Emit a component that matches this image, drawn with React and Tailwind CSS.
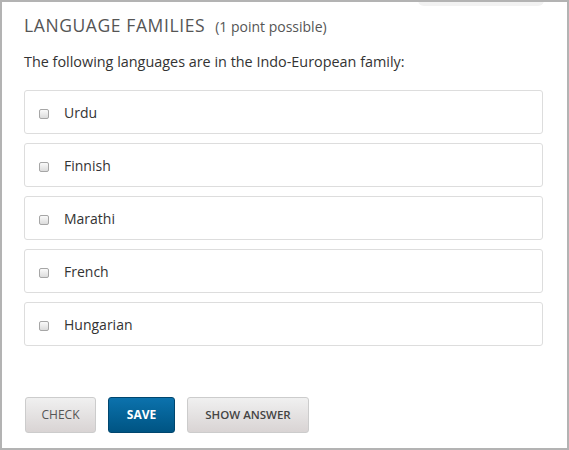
export default function App() {
  const options = ["Urdu", "Finnish", "Marathi", "French", "Hungarian"];

  return (
    <div
      className="w-[569px] h-[450px] bg-white border-2 border-[#b3b3b3] relative overflow-hidden"
      style={{ fontFamily: '"Open Sans", sans-serif' }}
    >
      {/* cut-off button peeking at the top */}
      <div className="absolute left-[416px] top-[-10px] w-[126px] h-[14px] rounded-md bg-[#f2f2f2]"></div>

      <div className="pl-[22px] pr-[24px] pt-[11px]">
        <h2 className="flex items-baseline gap-[10px] text-[#555] leading-[24px]">
          <span className="text-[17.5px] tracking-[0.6px]">LANGUAGE FAMILIES</span>
          <span className="text-[14px] text-[#555]">(1 point possible)</span>
        </h2>

        <p className="mt-[13px] text-[14.4px] text-[#333] leading-[20px]">
          The following languages are in the Indo-European family:
        </p>

        {/* Options */}
        <div className="mt-[18px] flex flex-col gap-[9px]">
          {options.map((o) => (
            <label
              key={o}
              className="flex items-center h-[44px] border border-[#ddd] rounded-[3px] pl-[14px]"
            >
              <span className="w-[10px] h-[10px] rounded-[2px] border border-[#a6a6a6] bg-gradient-to-b from-[#fafafa] to-[#dcdcdc] mt-[3px]"></span>
              <span className="ml-[15px] text-[14px] text-[#333]">{o}</span>
            </label>
          ))}
        </div>

        {/* Actions */}
        <div className="mt-[51px] flex items-center gap-[12px] pl-[1px]">
          <button className="h-[36px] w-[71px] rounded-[3px] border border-[#ccc] bg-gradient-to-b from-[#f0f0f0] to-[#d9d4d4] text-[12px] text-[#555]">
            CHECK
          </button>
          <button className="h-[36px] w-[67px] rounded-[3px] border border-[#00466e] bg-gradient-to-b from-[#0c72ad] to-[#005483] text-[12px] font-bold text-white">
            SAVE
          </button>
          <button className="h-[36px] w-[122px] rounded-[3px] border border-[#ccc] bg-gradient-to-b from-[#f0f0f0] to-[#d9d4d4] text-[11.5px] font-semibold text-[#444]">
            SHOW ANSWER
          </button>
        </div>
      </div>
    </div>
  );
}
